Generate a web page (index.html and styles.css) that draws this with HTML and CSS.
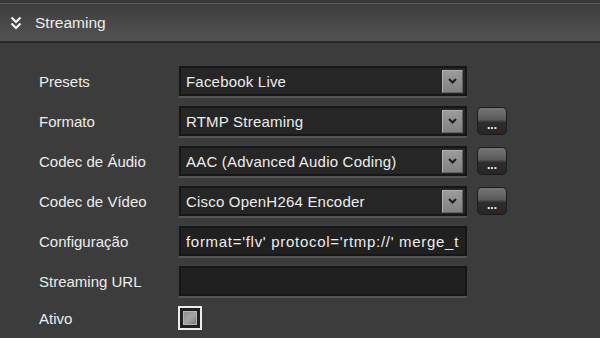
FILE: index.html
```html
<!DOCTYPE html>
<html lang="pt">
<head>
    <meta charset="UTF-8">
    <title>Streaming</title>
    <link rel="stylesheet" href="styles.css">
</head>
<body>

    <div class="topstrip"></div>

    <div class="section-head">
        <svg class="chevrons" width="12" height="14" viewBox="0 0 12 14">
            <polyline points="1.5,1.5 6,6 10.5,1.5" />
            <polyline points="1.5,7.5 6,12 10.5,7.5" />
        </svg>
        <span>Streaming</span>
    </div>

    <div class="form">
        <label class="lbl">Presets</label>
        <div class="field select">
            <span class="value">Facebook Live</span>
            <span class="drop"><svg width="9" height="6" viewBox="0 0 9 6"><polyline points="1,1 4.5,4.5 8,1" /></svg></span>
        </div>
        <div></div>

        <label class="lbl">Formato</label>
        <div class="field select">
            <span class="value">RTMP Streaming</span>
            <span class="drop"><svg width="9" height="6" viewBox="0 0 9 6"><polyline points="1,1 4.5,4.5 8,1" /></svg></span>
        </div>
        <button class="more">...</button>

        <label class="lbl">Codec de Áudio</label>
        <div class="field select">
            <span class="value">AAC (Advanced Audio Coding)</span>
            <span class="drop"><svg width="9" height="6" viewBox="0 0 9 6"><polyline points="1,1 4.5,4.5 8,1" /></svg></span>
        </div>
        <button class="more">...</button>

        <label class="lbl">Codec de Vídeo</label>
        <div class="field select">
            <span class="value">Cisco OpenH264 Encoder</span>
            <span class="drop"><svg width="9" height="6" viewBox="0 0 9 6"><polyline points="1,1 4.5,4.5 8,1" /></svg></span>
        </div>
        <button class="more">...</button>

        <label class="lbl">Configuração</label>
        <div class="field text">
            <span class="value wide">format='flv' protocol='rtmp://' merge_t</span>
        </div>
        <div></div>

        <label class="lbl">Streaming URL</label>
        <div class="field text"></div>
        <div></div>

        <label class="lbl">Ativo</label>
        <div class="check-cell"><span class="check"></span></div>
        <div></div>
    </div>

</body>
</html>
```

FILE: styles.css
```css
body {
    margin: 0;
    background-color: #3c3c3c;
    font-family: "Liberation Sans", Arial, sans-serif;
    font-size: 15px;
    color: #ececec;
    overflow: hidden;
}

.topstrip {
    height: 3px;
    background-color: #383838;
    border-bottom: 1px solid #5a5a5a;
}

.section-head {
    height: 37px;
    display: flex;
    align-items: center;
    padding-left: 10px;
    background: linear-gradient(#3e3e3e, #525252);
    border-bottom: 2px solid #2a2a2a;
    font-size: 15.5px;
}

.chevrons {
    margin-right: 13px;
    margin-top: 1px;
}

.chevrons polyline {
    fill: none;
    stroke: #f4f4f4;
    stroke-width: 2.2;
}

.form {
    display: grid;
    grid-template-columns: 130px 288px 30px;
    column-gap: 10px;
    row-gap: 10px;
    align-items: center;
    padding: 23px 0 0 39px;
}

.lbl {
    white-space: nowrap;
}

.field {
    height: 30px;
    box-sizing: border-box;
    border: 2px solid #161616;
    background-color: #262626;
    box-shadow: 0 2px 0 #565656;
    display: flex;
    align-items: center;
    padding-left: 5px;
    overflow: hidden;
}

.field.text {
    background-color: #202020;
}

.value {
    flex: 1;
    white-space: nowrap;
    overflow: hidden;
    letter-spacing: 0.2px;
}

.value.wide {
    letter-spacing: 0.7px;
}

.drop {
    width: 19px;
    height: 21px;
    margin-right: 2px;
    display: flex;
    align-items: center;
    justify-content: center;
    background: linear-gradient(#9a9a9a, #828282);
    border: 1px solid #b0b0b0;
    border-right-color: #5e5e5e;
    border-bottom-color: #5e5e5e;
}

.drop polyline {
    fill: none;
    stroke: #1c1c1c;
    stroke-width: 2;
}

.more {
    width: 30px;
    height: 28px;
    padding: 0 0 3px;
    border: 1px solid #1c1c1c;
    border-radius: 5px;
    background: linear-gradient(#767676, #5a5a5a 45%, #2e2e2e 55%, #262626);
    color: #f0f0f0;
    font-family: "Liberation Sans", Arial, sans-serif;
    font-size: 12px;
    font-weight: bold;
    display: flex;
    align-items: flex-end;
    justify-content: center;
    line-height: 1;
}

.check-cell {
    display: flex;
    margin-left: -1px;
}

.check {
    width: 20px;
    height: 20px;
    border: 2px solid #ededed;
    background: #202020;
    display: flex;
    align-items: center;
    justify-content: center;
}

.check::after {
    content: "";
    width: 12px;
    height: 12px;
    border: 1px solid #b4b4b4;
    background: linear-gradient(135deg, #8e8e8e, #a4a4a4 50%, #7a7a7a);
}
```
